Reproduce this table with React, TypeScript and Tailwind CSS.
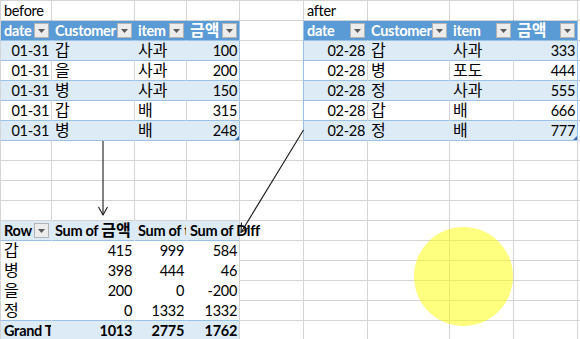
import React from 'react';

type CellSpec = {
  t?: string;
  r?: boolean;
  bg?: string;
  bl?: string;
  bt?: string;
  cls?: string;
  dd?: boolean;
  clip?: boolean;
  over?: boolean;
  handle?: boolean;
};

const COLS = [
  'w-[51px]',
  'w-[83px]',
  'w-[52px]',
  'w-[53px]',
  'w-[64px]',
  'w-[64px]',
  'w-[82px]',
  'w-[64px]',
  'w-[64px]',
  'w-[3px]',
];

const GRID_L = 'border-l-[#d4d4d4]';
const GRID_T = 'border-t-[#d4d4d4]';
const BLUE_L = 'border-l-[#9bc2e6]';
const BLUE_T = 'border-t-[#9bc2e6]';
const HEAD_BG = 'bg-[#5b9bd5]';
const HEAD_L = 'border-l-[#5b9bd5]';
const BAND_BG = 'bg-[#ddebf7]';
const BAND_L = 'border-l-[#ddebf7]';

// hangul is set a little larger, like Malgun Gothic next to Calibri
const withHangul = (text: string) =>
  text.split(/([\uac00-\ud7a3]+)/).map((part, i) =>
    /[\uac00-\ud7a3]/.test(part) ? (
      <span key={i} className="text-[16px] tracking-normal">
        {part}
      </span>
    ) : (
      part
    )
  );

const DropDown = () => (
  <span className="flex h-[15px] w-[15px] shrink-0 items-center justify-center self-center border border-[#b4b4b4] bg-[#ececec]">
    <svg width="7" height="4" viewBox="0 0 7 4">
      <path d="M0 0 H7 L3.5 4 Z" fill="#5a5a5a" />
    </svg>
  </span>
);

const Cell = ({ spec, col }: { spec: CellSpec; col: number }) => {
  const { t, r, bg = '', bl = GRID_L, bt = GRID_T, cls = '', dd, clip, over, handle } = spec;
  return (
    <div
      className={`relative flex h-5 shrink-0 border-l border-t ${COLS[col]} ${bg} ${bl} ${bt} ${
        r ? 'justify-end' : 'justify-between'
      } items-end px-[3px] pr-[2px] ${clip ? 'overflow-hidden' : ''}`}
    >
      {t !== undefined && (
        <span className={`whitespace-nowrap ${over ? 'relative z-10' : ''} ${cls}`}>{withHangul(t)}</span>
      )}
      {dd && <DropDown />}
      {handle && (
        <svg className="absolute bottom-0 right-0" width="4" height="4" viewBox="0 0 4 4">
          <path d="M4 0 V4 H0 Z" fill="#3c6fb4" />
        </svg>
      )}
    </div>
  );
};

const blank = (): CellSpec[] => Array.from({ length: 10 }, () => ({}));

const before = [
  ['01-31', '갑', '사과', '100'],
  ['01-31', '을', '사과', '200'],
  ['01-31', '병', '사과', '150'],
  ['01-31', '갑', '배', '315'],
  ['01-31', '병', '배', '248'],
];
const after = [
  ['02-28', '갑', '사과', '333'],
  ['02-28', '병', '포도', '444'],
  ['02-28', '정', '사과', '555'],
  ['02-28', '갑', '배', '666'],
  ['02-28', '정', '배', '777'],
];
const pivot = [
  ['갑', '415', '999', '584'],
  ['병', '398', '444', '46'],
  ['을', '200', '0', '-200'],
  ['정', '0', '1332', '1332'],
];
const heads = ['date', 'Customer', 'item', '금액'];

const buildRows = (): CellSpec[][] => {
  const rows: CellSpec[][] = Array.from({ length: 17 }, blank);

  rows[0][0] = { t: 'before' };
  rows[0][5] = { t: 'after' };

  // table headers
  heads.forEach((h, i) => {
    rows[1][i] = { t: h, dd: true, bg: HEAD_BG, bl: i === 0 ? GRID_L : HEAD_L, cls: 'font-bold text-white', clip: true };
    rows[1][5 + i] = { t: h, dd: true, bg: HEAD_BG, bl: i === 0 ? BLUE_L : HEAD_L, cls: 'font-bold text-white', clip: true };
  });

  const fillTable = (data: string[][], start: number) => {
    data.forEach((d, k) => {
      const band = k % 2 === 0;
      d.forEach((v, i) => {
        const outer = start === 5 && i === 0;
        rows[2 + k][start + i] = {
          t: v,
          r: i === 0 || i === 3,
          bg: band ? BAND_BG : '',
          bl: outer ? BLUE_L : i === 0 ? GRID_L : band ? BAND_L : GRID_L,
          bt: BLUE_T,
          handle: k === 4 && i === 3,
        };
      });
    });
    for (let i = 0; i < 4; i++) rows[7][start + i] = { bt: BLUE_T };
  };
  fillTable(before, 0);
  fillTable(after, 5);
  for (let k = 1; k <= 6; k++) {
    rows[k][4] = { ...rows[k][4], bl: BLUE_L };
    rows[k][9] = { ...rows[k][9], bl: BLUE_L };
  }

  // pivot table
  rows[11][0] = { t: 'Row', dd: true, bg: BAND_BG, cls: 'font-bold' };
  rows[11][1] = { t: 'Sum of 금액', bg: BAND_BG, bl: BAND_L, cls: 'font-bold', clip: true };
  rows[11][2] = { t: 'Sum of total', bg: BAND_BG, bl: BAND_L, cls: 'font-bold', clip: true };
  rows[11][3] = { t: 'Sum of Diff', bg: BAND_BG, bl: BAND_L, cls: 'font-bold', over: true };

  pivot.forEach((p, k) => {
    p.forEach((v, i) => {
      rows[12 + k][i] = {
        t: v,
        r: i > 0,
        bl: i === 0 ? GRID_L : 'border-l-white',
        bt: k === 0 ? BLUE_T : 'border-t-white',
      };
    });
  });

  ['Grand Total', '1013', '2775', '1762'].forEach((v, i) => {
    rows[16][i] = {
      t: v,
      r: i > 0,
      bg: BAND_BG,
      bl: i === 0 ? GRID_L : BAND_L,
      bt: BLUE_T,
      cls: 'font-bold',
      clip: true,
    };
  });

  return rows;
};

const Arrows = () => (
  <svg className="pointer-events-none absolute left-0 top-0" width="580" height="339" viewBox="0 0 580 339">
    <g stroke="#1a1a1a" strokeWidth="1.1" fill="none">
      <path d="M103 141 V215" />
      <path d="M98.5 207 L103 215 L107.5 207" />
      <path d="M303.5 130 L241 232.5" />
      <path d="M241.5 222.5 L241 232.5 L249.5 227" />
    </g>
  </svg>
);

const App = () => {
  const rows = buildRows();
  return (
    <div className="relative h-[339px] w-[580px] overflow-hidden bg-white font-[Lato,'Noto_Sans_CJK_KR',sans-serif] text-[14.5px] leading-[18px] tracking-[-0.3px] text-black">
      <div className="flex flex-col">
        {rows.map((row, ri) => (
          <div key={ri} className="flex">
            {row.map((c, ci) => (
              <Cell key={ci} spec={c} col={ci} />
            ))}
          </div>
        ))}
      </div>
      <div className="absolute left-[414px] top-[227px] h-[99px] w-[99px] rounded-full bg-[#ffff00]/50" />
      <Arrows />
    </div>
  );
};

export default App;
